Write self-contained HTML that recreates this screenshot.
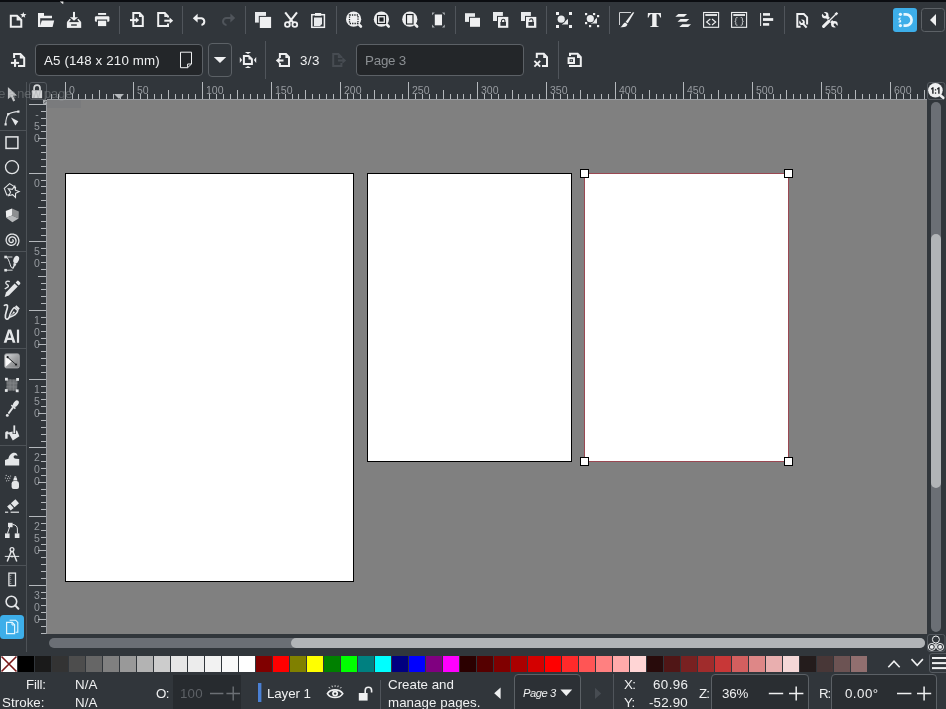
<!DOCTYPE html><html><head><meta charset="utf-8"><title>Inkscape</title><style>
*{box-sizing:border-box;margin:0;padding:0}
html,body{width:946px;height:709px;overflow:hidden;background:#31363b}
body{position:relative;font-family:"Liberation Sans",sans-serif;color:#eff0f1;font-size:13px}
.a{position:absolute}
.sep{position:absolute;width:1px;background:#50555b}
svg{position:absolute;overflow:visible}
.t{position:absolute;white-space:nowrap;line-height:1;will-change:transform}
.entry{position:absolute;background:#232629;border:1px solid #5c6166;border-radius:4px}
.btn{position:absolute;border:1px solid #5c6166;border-radius:4px}
.rt{position:absolute;background:#b4b8bc}
.rl{position:absolute;will-change:transform;color:#979ba0;font-size:10.5px;line-height:1;white-space:nowrap}
</style></head><body>
<div class="a" style="left:0;top:0;width:946px;height:2px;background:#0b0d11"></div>
<svg style="left:0;top:0" width="70" height="6" viewBox="0 0 70 6"><path d="M59.8 1.4H63.4L63.2 4.2Z" fill="#e8e8e8"/></svg>
<div class="a" style="left:47px;top:100px;width:880px;height:534px;background:#808080"></div>
<div class="a" style="left:47px;top:100px;width:34px;height:8px;background:#7a7b7d"></div>
<div class="a" style="left:65px;top:173px;width:289px;height:409px;background:#fff;border:1px solid #000"></div>
<div class="a" style="left:367px;top:173px;width:205px;height:289px;background:#fff;border:1px solid #000"></div>
<div class="a" style="left:584px;top:173px;width:205px;height:289px;background:#fff;border:1px solid #9a4852"></div>
<div class="a" style="left:580px;top:169px;width:9px;height:9px;background:#fff;border:1px solid #000"></div>
<div class="a" style="left:784px;top:169px;width:9px;height:9px;background:#fff;border:1px solid #000"></div>
<div class="a" style="left:580px;top:457px;width:9px;height:9px;background:#fff;border:1px solid #000"></div>
<div class="a" style="left:784px;top:457px;width:9px;height:9px;background:#fff;border:1px solid #000"></div>
<div class="a" style="left:27px;top:82px;width:900px;height:18px;background:#31363b"></div>
<div class="a" style="left:47px;top:99px;width:880px;height:1px;background:#9a9da1"></div>
<div class="a" style="left:46px;top:100px;width:1px;height:534px;background:#9a9da1"></div>
<div class="rt" style="left:51px;top:94px;width:1px;height:5px"></div>
<div class="rt" style="left:58px;top:94px;width:1px;height:5px"></div>
<div class="rt" style="left:65px;top:82px;width:1px;height:17px"></div>
<div class="rl" style="left:69px;top:85px">0</div>
<div class="rt" style="left:72px;top:94px;width:1px;height:5px"></div>
<div class="rt" style="left:78px;top:94px;width:1px;height:5px"></div>
<div class="rt" style="left:85px;top:94px;width:1px;height:5px"></div>
<div class="rt" style="left:92px;top:94px;width:1px;height:5px"></div>
<div class="rt" style="left:99px;top:90px;width:1px;height:9px"></div>
<div class="rt" style="left:106px;top:94px;width:1px;height:5px"></div>
<div class="rt" style="left:113px;top:94px;width:1px;height:5px"></div>
<div class="rt" style="left:120px;top:94px;width:1px;height:5px"></div>
<div class="rt" style="left:127px;top:94px;width:1px;height:5px"></div>
<div class="rt" style="left:133px;top:82px;width:1px;height:17px"></div>
<div class="rl" style="left:137px;top:85px">50</div>
<div class="rt" style="left:140px;top:94px;width:1px;height:5px"></div>
<div class="rt" style="left:147px;top:94px;width:1px;height:5px"></div>
<div class="rt" style="left:154px;top:94px;width:1px;height:5px"></div>
<div class="rt" style="left:161px;top:94px;width:1px;height:5px"></div>
<div class="rt" style="left:168px;top:90px;width:1px;height:9px"></div>
<div class="rt" style="left:175px;top:94px;width:1px;height:5px"></div>
<div class="rt" style="left:182px;top:94px;width:1px;height:5px"></div>
<div class="rt" style="left:188px;top:94px;width:1px;height:5px"></div>
<div class="rt" style="left:195px;top:94px;width:1px;height:5px"></div>
<div class="rt" style="left:202px;top:82px;width:1px;height:17px"></div>
<div class="rl" style="left:206px;top:85px">100</div>
<div class="rt" style="left:209px;top:94px;width:1px;height:5px"></div>
<div class="rt" style="left:216px;top:94px;width:1px;height:5px"></div>
<div class="rt" style="left:223px;top:94px;width:1px;height:5px"></div>
<div class="rt" style="left:230px;top:94px;width:1px;height:5px"></div>
<div class="rt" style="left:237px;top:90px;width:1px;height:9px"></div>
<div class="rt" style="left:243px;top:94px;width:1px;height:5px"></div>
<div class="rt" style="left:250px;top:94px;width:1px;height:5px"></div>
<div class="rt" style="left:257px;top:94px;width:1px;height:5px"></div>
<div class="rt" style="left:264px;top:94px;width:1px;height:5px"></div>
<div class="rt" style="left:271px;top:82px;width:1px;height:17px"></div>
<div class="rl" style="left:275px;top:85px">150</div>
<div class="rt" style="left:278px;top:94px;width:1px;height:5px"></div>
<div class="rt" style="left:285px;top:94px;width:1px;height:5px"></div>
<div class="rt" style="left:292px;top:94px;width:1px;height:5px"></div>
<div class="rt" style="left:298px;top:94px;width:1px;height:5px"></div>
<div class="rt" style="left:305px;top:90px;width:1px;height:9px"></div>
<div class="rt" style="left:312px;top:94px;width:1px;height:5px"></div>
<div class="rt" style="left:319px;top:94px;width:1px;height:5px"></div>
<div class="rt" style="left:326px;top:94px;width:1px;height:5px"></div>
<div class="rt" style="left:333px;top:94px;width:1px;height:5px"></div>
<div class="rt" style="left:340px;top:82px;width:1px;height:17px"></div>
<div class="rl" style="left:344px;top:85px">200</div>
<div class="rt" style="left:347px;top:94px;width:1px;height:5px"></div>
<div class="rt" style="left:353px;top:94px;width:1px;height:5px"></div>
<div class="rt" style="left:360px;top:94px;width:1px;height:5px"></div>
<div class="rt" style="left:367px;top:94px;width:1px;height:5px"></div>
<div class="rt" style="left:374px;top:90px;width:1px;height:9px"></div>
<div class="rt" style="left:381px;top:94px;width:1px;height:5px"></div>
<div class="rt" style="left:388px;top:94px;width:1px;height:5px"></div>
<div class="rt" style="left:395px;top:94px;width:1px;height:5px"></div>
<div class="rt" style="left:402px;top:94px;width:1px;height:5px"></div>
<div class="rt" style="left:408px;top:82px;width:1px;height:17px"></div>
<div class="rl" style="left:412px;top:85px">250</div>
<div class="rt" style="left:415px;top:94px;width:1px;height:5px"></div>
<div class="rt" style="left:422px;top:94px;width:1px;height:5px"></div>
<div class="rt" style="left:429px;top:94px;width:1px;height:5px"></div>
<div class="rt" style="left:436px;top:94px;width:1px;height:5px"></div>
<div class="rt" style="left:443px;top:90px;width:1px;height:9px"></div>
<div class="rt" style="left:450px;top:94px;width:1px;height:5px"></div>
<div class="rt" style="left:457px;top:94px;width:1px;height:5px"></div>
<div class="rt" style="left:463px;top:94px;width:1px;height:5px"></div>
<div class="rt" style="left:470px;top:94px;width:1px;height:5px"></div>
<div class="rt" style="left:477px;top:82px;width:1px;height:17px"></div>
<div class="rl" style="left:481px;top:85px">300</div>
<div class="rt" style="left:484px;top:94px;width:1px;height:5px"></div>
<div class="rt" style="left:491px;top:94px;width:1px;height:5px"></div>
<div class="rt" style="left:498px;top:94px;width:1px;height:5px"></div>
<div class="rt" style="left:505px;top:94px;width:1px;height:5px"></div>
<div class="rt" style="left:512px;top:90px;width:1px;height:9px"></div>
<div class="rt" style="left:518px;top:94px;width:1px;height:5px"></div>
<div class="rt" style="left:525px;top:94px;width:1px;height:5px"></div>
<div class="rt" style="left:532px;top:94px;width:1px;height:5px"></div>
<div class="rt" style="left:539px;top:94px;width:1px;height:5px"></div>
<div class="rt" style="left:546px;top:82px;width:1px;height:17px"></div>
<div class="rl" style="left:550px;top:85px">350</div>
<div class="rt" style="left:553px;top:94px;width:1px;height:5px"></div>
<div class="rt" style="left:560px;top:94px;width:1px;height:5px"></div>
<div class="rt" style="left:567px;top:94px;width:1px;height:5px"></div>
<div class="rt" style="left:573px;top:94px;width:1px;height:5px"></div>
<div class="rt" style="left:580px;top:90px;width:1px;height:9px"></div>
<div class="rt" style="left:587px;top:94px;width:1px;height:5px"></div>
<div class="rt" style="left:594px;top:94px;width:1px;height:5px"></div>
<div class="rt" style="left:601px;top:94px;width:1px;height:5px"></div>
<div class="rt" style="left:608px;top:94px;width:1px;height:5px"></div>
<div class="rt" style="left:615px;top:82px;width:1px;height:17px"></div>
<div class="rl" style="left:619px;top:85px">400</div>
<div class="rt" style="left:621px;top:94px;width:1px;height:5px"></div>
<div class="rt" style="left:628px;top:94px;width:1px;height:5px"></div>
<div class="rt" style="left:635px;top:94px;width:1px;height:5px"></div>
<div class="rt" style="left:642px;top:94px;width:1px;height:5px"></div>
<div class="rt" style="left:649px;top:90px;width:1px;height:9px"></div>
<div class="rt" style="left:656px;top:94px;width:1px;height:5px"></div>
<div class="rt" style="left:663px;top:94px;width:1px;height:5px"></div>
<div class="rt" style="left:670px;top:94px;width:1px;height:5px"></div>
<div class="rt" style="left:676px;top:94px;width:1px;height:5px"></div>
<div class="rt" style="left:683px;top:82px;width:1px;height:17px"></div>
<div class="rl" style="left:687px;top:85px">450</div>
<div class="rt" style="left:690px;top:94px;width:1px;height:5px"></div>
<div class="rt" style="left:697px;top:94px;width:1px;height:5px"></div>
<div class="rt" style="left:704px;top:94px;width:1px;height:5px"></div>
<div class="rt" style="left:711px;top:94px;width:1px;height:5px"></div>
<div class="rt" style="left:718px;top:90px;width:1px;height:9px"></div>
<div class="rt" style="left:725px;top:94px;width:1px;height:5px"></div>
<div class="rt" style="left:731px;top:94px;width:1px;height:5px"></div>
<div class="rt" style="left:738px;top:94px;width:1px;height:5px"></div>
<div class="rt" style="left:745px;top:94px;width:1px;height:5px"></div>
<div class="rt" style="left:752px;top:82px;width:1px;height:17px"></div>
<div class="rl" style="left:756px;top:85px">500</div>
<div class="rt" style="left:759px;top:94px;width:1px;height:5px"></div>
<div class="rt" style="left:766px;top:94px;width:1px;height:5px"></div>
<div class="rt" style="left:773px;top:94px;width:1px;height:5px"></div>
<div class="rt" style="left:780px;top:94px;width:1px;height:5px"></div>
<div class="rt" style="left:786px;top:90px;width:1px;height:9px"></div>
<div class="rt" style="left:793px;top:94px;width:1px;height:5px"></div>
<div class="rt" style="left:800px;top:94px;width:1px;height:5px"></div>
<div class="rt" style="left:807px;top:94px;width:1px;height:5px"></div>
<div class="rt" style="left:814px;top:94px;width:1px;height:5px"></div>
<div class="rt" style="left:821px;top:82px;width:1px;height:17px"></div>
<div class="rl" style="left:825px;top:85px">550</div>
<div class="rt" style="left:828px;top:94px;width:1px;height:5px"></div>
<div class="rt" style="left:835px;top:94px;width:1px;height:5px"></div>
<div class="rt" style="left:841px;top:94px;width:1px;height:5px"></div>
<div class="rt" style="left:848px;top:94px;width:1px;height:5px"></div>
<div class="rt" style="left:855px;top:90px;width:1px;height:9px"></div>
<div class="rt" style="left:862px;top:94px;width:1px;height:5px"></div>
<div class="rt" style="left:869px;top:94px;width:1px;height:5px"></div>
<div class="rt" style="left:876px;top:94px;width:1px;height:5px"></div>
<div class="rt" style="left:883px;top:94px;width:1px;height:5px"></div>
<div class="rt" style="left:890px;top:82px;width:1px;height:17px"></div>
<div class="rl" style="left:894px;top:85px">600</div>
<div class="rt" style="left:896px;top:94px;width:1px;height:5px"></div>
<div class="rt" style="left:903px;top:94px;width:1px;height:5px"></div>
<div class="rt" style="left:910px;top:94px;width:1px;height:5px"></div>
<div class="rt" style="left:917px;top:94px;width:1px;height:5px"></div>
<div class="rt" style="left:924px;top:90px;width:1px;height:9px"></div>
<div class="rt" style="left:29px;top:104px;width:17px;height:1px"></div>
<div class="rl" style="left:32px;width:10px;text-align:center;top:109px">-</div>
<div class="rl" style="left:32px;width:10px;text-align:center;top:121px">5</div>
<div class="rl" style="left:32px;width:10px;text-align:center;top:133px">0</div>
<div class="rt" style="left:41px;top:111px;width:5px;height:1px"></div>
<div class="rt" style="left:41px;top:118px;width:5px;height:1px"></div>
<div class="rt" style="left:41px;top:125px;width:5px;height:1px"></div>
<div class="rt" style="left:41px;top:131px;width:5px;height:1px"></div>
<div class="rt" style="left:38px;top:138px;width:8px;height:1px"></div>
<div class="rt" style="left:41px;top:145px;width:5px;height:1px"></div>
<div class="rt" style="left:41px;top:152px;width:5px;height:1px"></div>
<div class="rt" style="left:41px;top:159px;width:5px;height:1px"></div>
<div class="rt" style="left:41px;top:166px;width:5px;height:1px"></div>
<div class="rt" style="left:29px;top:173px;width:17px;height:1px"></div>
<div class="rl" style="left:32px;width:10px;text-align:center;top:178px">0</div>
<div class="rt" style="left:41px;top:180px;width:5px;height:1px"></div>
<div class="rt" style="left:41px;top:186px;width:5px;height:1px"></div>
<div class="rt" style="left:41px;top:193px;width:5px;height:1px"></div>
<div class="rt" style="left:41px;top:200px;width:5px;height:1px"></div>
<div class="rt" style="left:38px;top:207px;width:8px;height:1px"></div>
<div class="rt" style="left:41px;top:214px;width:5px;height:1px"></div>
<div class="rt" style="left:41px;top:221px;width:5px;height:1px"></div>
<div class="rt" style="left:41px;top:228px;width:5px;height:1px"></div>
<div class="rt" style="left:41px;top:235px;width:5px;height:1px"></div>
<div class="rt" style="left:29px;top:241px;width:17px;height:1px"></div>
<div class="rl" style="left:32px;width:10px;text-align:center;top:246px">5</div>
<div class="rl" style="left:32px;width:10px;text-align:center;top:258px">0</div>
<div class="rt" style="left:41px;top:248px;width:5px;height:1px"></div>
<div class="rt" style="left:41px;top:255px;width:5px;height:1px"></div>
<div class="rt" style="left:41px;top:262px;width:5px;height:1px"></div>
<div class="rt" style="left:41px;top:269px;width:5px;height:1px"></div>
<div class="rt" style="left:38px;top:276px;width:8px;height:1px"></div>
<div class="rt" style="left:41px;top:283px;width:5px;height:1px"></div>
<div class="rt" style="left:41px;top:289px;width:5px;height:1px"></div>
<div class="rt" style="left:41px;top:296px;width:5px;height:1px"></div>
<div class="rt" style="left:41px;top:303px;width:5px;height:1px"></div>
<div class="rt" style="left:29px;top:310px;width:17px;height:1px"></div>
<div class="rl" style="left:32px;width:10px;text-align:center;top:315px">1</div>
<div class="rl" style="left:32px;width:10px;text-align:center;top:327px">0</div>
<div class="rl" style="left:32px;width:10px;text-align:center;top:339px">0</div>
<div class="rt" style="left:41px;top:317px;width:5px;height:1px"></div>
<div class="rt" style="left:41px;top:324px;width:5px;height:1px"></div>
<div class="rt" style="left:41px;top:331px;width:5px;height:1px"></div>
<div class="rt" style="left:41px;top:338px;width:5px;height:1px"></div>
<div class="rt" style="left:38px;top:344px;width:8px;height:1px"></div>
<div class="rt" style="left:41px;top:351px;width:5px;height:1px"></div>
<div class="rt" style="left:41px;top:358px;width:5px;height:1px"></div>
<div class="rt" style="left:41px;top:365px;width:5px;height:1px"></div>
<div class="rt" style="left:41px;top:372px;width:5px;height:1px"></div>
<div class="rt" style="left:29px;top:379px;width:17px;height:1px"></div>
<div class="rl" style="left:32px;width:10px;text-align:center;top:384px">1</div>
<div class="rl" style="left:32px;width:10px;text-align:center;top:396px">5</div>
<div class="rl" style="left:32px;width:10px;text-align:center;top:408px">0</div>
<div class="rt" style="left:41px;top:386px;width:5px;height:1px"></div>
<div class="rt" style="left:41px;top:392px;width:5px;height:1px"></div>
<div class="rt" style="left:41px;top:399px;width:5px;height:1px"></div>
<div class="rt" style="left:41px;top:406px;width:5px;height:1px"></div>
<div class="rt" style="left:38px;top:413px;width:8px;height:1px"></div>
<div class="rt" style="left:41px;top:420px;width:5px;height:1px"></div>
<div class="rt" style="left:41px;top:427px;width:5px;height:1px"></div>
<div class="rt" style="left:41px;top:434px;width:5px;height:1px"></div>
<div class="rt" style="left:41px;top:441px;width:5px;height:1px"></div>
<div class="rt" style="left:29px;top:447px;width:17px;height:1px"></div>
<div class="rl" style="left:32px;width:10px;text-align:center;top:452px">2</div>
<div class="rl" style="left:32px;width:10px;text-align:center;top:464px">0</div>
<div class="rl" style="left:32px;width:10px;text-align:center;top:476px">0</div>
<div class="rt" style="left:41px;top:454px;width:5px;height:1px"></div>
<div class="rt" style="left:41px;top:461px;width:5px;height:1px"></div>
<div class="rt" style="left:41px;top:468px;width:5px;height:1px"></div>
<div class="rt" style="left:41px;top:475px;width:5px;height:1px"></div>
<div class="rt" style="left:38px;top:482px;width:8px;height:1px"></div>
<div class="rt" style="left:41px;top:489px;width:5px;height:1px"></div>
<div class="rt" style="left:41px;top:495px;width:5px;height:1px"></div>
<div class="rt" style="left:41px;top:502px;width:5px;height:1px"></div>
<div class="rt" style="left:41px;top:509px;width:5px;height:1px"></div>
<div class="rt" style="left:29px;top:516px;width:17px;height:1px"></div>
<div class="rl" style="left:32px;width:10px;text-align:center;top:521px">2</div>
<div class="rl" style="left:32px;width:10px;text-align:center;top:533px">5</div>
<div class="rl" style="left:32px;width:10px;text-align:center;top:545px">0</div>
<div class="rt" style="left:41px;top:523px;width:5px;height:1px"></div>
<div class="rt" style="left:41px;top:530px;width:5px;height:1px"></div>
<div class="rt" style="left:41px;top:537px;width:5px;height:1px"></div>
<div class="rt" style="left:41px;top:544px;width:5px;height:1px"></div>
<div class="rt" style="left:38px;top:550px;width:8px;height:1px"></div>
<div class="rt" style="left:41px;top:557px;width:5px;height:1px"></div>
<div class="rt" style="left:41px;top:564px;width:5px;height:1px"></div>
<div class="rt" style="left:41px;top:571px;width:5px;height:1px"></div>
<div class="rt" style="left:41px;top:578px;width:5px;height:1px"></div>
<div class="rt" style="left:29px;top:585px;width:17px;height:1px"></div>
<div class="rl" style="left:32px;width:10px;text-align:center;top:590px">3</div>
<div class="rl" style="left:32px;width:10px;text-align:center;top:602px">0</div>
<div class="rl" style="left:32px;width:10px;text-align:center;top:614px">0</div>
<div class="rt" style="left:41px;top:592px;width:5px;height:1px"></div>
<div class="rt" style="left:41px;top:598px;width:5px;height:1px"></div>
<div class="rt" style="left:41px;top:605px;width:5px;height:1px"></div>
<div class="rt" style="left:41px;top:612px;width:5px;height:1px"></div>
<div class="rt" style="left:38px;top:619px;width:8px;height:1px"></div>
<div class="rt" style="left:41px;top:626px;width:5px;height:1px"></div>
<div class="rt" style="left:41px;top:633px;width:5px;height:1px"></div>
<svg style="left:114px;top:94px" width="10" height="5" viewBox="0 0 10 5"><path d="M0 0H10L5 5Z" fill="#b4b8bc"/></svg>
<div class="a" style="left:26px;top:82px;width:1px;height:570px;background:#4d5257"></div>
<div class="a" style="left:0;top:130px;width:26px;height:1px;background:#4d5257"></div>
<div class="a" style="left:0;top:251px;width:26px;height:1px;background:#4d5257"></div>
<div class="a" style="left:0;top:348px;width:26px;height:1px;background:#4d5257"></div>
<div class="a" style="left:0;top:445px;width:26px;height:1px;background:#4d5257"></div>
<div class="a" style="left:0;top:565px;width:26px;height:1px;background:#4d5257"></div>
<div class="btn" style="left:29px;top:82px;width:18px;height:18px;border-color:#555a60;border-radius:3px"></div>
<div class="a" style="left:927px;top:100px;width:19px;height:552px;background:#31363b"></div>
<div class="a" style="left:931px;top:102px;width:10px;height:530px;border-radius:5px;background:#6b6f75"></div>
<div class="a" style="left:931px;top:234px;width:10px;height:254px;border-radius:5px;background:#b1b4b7"></div>
<div class="a" style="left:49px;top:638px;width:876px;height:10px;border-radius:5px;background:#6b6f75"></div>
<div class="a" style="left:291px;top:638px;width:634px;height:10px;border-radius:5px;background:#b1b4b7"></div>
<svg style="left:1px;top:656px" width="16" height="16" viewBox="0 0 16 16"><rect width="16" height="16" fill="#fff"/><path d="M0.5 0.5L15.5 15.5M15.5 0.5L0.5 15.5" stroke="#7a1a1a" stroke-width="1.6"/></svg>
<div class="a" style="left:18px;top:656px;width:16px;height:16px;background:#000000"></div>
<div class="a" style="left:35px;top:656px;width:16px;height:16px;background:#1a1a1a"></div>
<div class="a" style="left:52px;top:656px;width:16px;height:16px;background:#333333"></div>
<div class="a" style="left:69px;top:656px;width:16px;height:16px;background:#4d4d4d"></div>
<div class="a" style="left:86px;top:656px;width:16px;height:16px;background:#666666"></div>
<div class="a" style="left:103px;top:656px;width:16px;height:16px;background:#808080"></div>
<div class="a" style="left:120px;top:656px;width:16px;height:16px;background:#999999"></div>
<div class="a" style="left:137px;top:656px;width:16px;height:16px;background:#b3b3b3"></div>
<div class="a" style="left:154px;top:656px;width:16px;height:16px;background:#cccccc"></div>
<div class="a" style="left:171px;top:656px;width:16px;height:16px;background:#e6e6e6"></div>
<div class="a" style="left:188px;top:656px;width:16px;height:16px;background:#ececec"></div>
<div class="a" style="left:205px;top:656px;width:16px;height:16px;background:#f2f2f2"></div>
<div class="a" style="left:222px;top:656px;width:16px;height:16px;background:#f9f9f9"></div>
<div class="a" style="left:239px;top:656px;width:16px;height:16px;background:#ffffff"></div>
<div class="a" style="left:256px;top:656px;width:16px;height:16px;background:#800000"></div>
<div class="a" style="left:273px;top:656px;width:16px;height:16px;background:#ff0000"></div>
<div class="a" style="left:290px;top:656px;width:16px;height:16px;background:#808000"></div>
<div class="a" style="left:307px;top:656px;width:16px;height:16px;background:#ffff00"></div>
<div class="a" style="left:324px;top:656px;width:16px;height:16px;background:#008000"></div>
<div class="a" style="left:341px;top:656px;width:16px;height:16px;background:#00ff00"></div>
<div class="a" style="left:358px;top:656px;width:16px;height:16px;background:#008080"></div>
<div class="a" style="left:375px;top:656px;width:16px;height:16px;background:#00ffff"></div>
<div class="a" style="left:392px;top:656px;width:16px;height:16px;background:#000080"></div>
<div class="a" style="left:409px;top:656px;width:16px;height:16px;background:#0000ff"></div>
<div class="a" style="left:426px;top:656px;width:16px;height:16px;background:#800080"></div>
<div class="a" style="left:443px;top:656px;width:16px;height:16px;background:#ff00ff"></div>
<div class="a" style="left:460px;top:656px;width:16px;height:16px;background:#2b0000"></div>
<div class="a" style="left:477px;top:656px;width:16px;height:16px;background:#550000"></div>
<div class="a" style="left:494px;top:656px;width:16px;height:16px;background:#800000"></div>
<div class="a" style="left:511px;top:656px;width:16px;height:16px;background:#aa0000"></div>
<div class="a" style="left:528px;top:656px;width:16px;height:16px;background:#d40000"></div>
<div class="a" style="left:545px;top:656px;width:16px;height:16px;background:#ff0000"></div>
<div class="a" style="left:562px;top:656px;width:16px;height:16px;background:#ff2a2a"></div>
<div class="a" style="left:579px;top:656px;width:16px;height:16px;background:#ff5555"></div>
<div class="a" style="left:596px;top:656px;width:16px;height:16px;background:#ff8080"></div>
<div class="a" style="left:613px;top:656px;width:16px;height:16px;background:#ffaaaa"></div>
<div class="a" style="left:630px;top:656px;width:16px;height:16px;background:#ffd5d5"></div>
<div class="a" style="left:647px;top:656px;width:16px;height:16px;background:#280b0b"></div>
<div class="a" style="left:664px;top:656px;width:16px;height:16px;background:#501616"></div>
<div class="a" style="left:681px;top:656px;width:16px;height:16px;background:#782121"></div>
<div class="a" style="left:698px;top:656px;width:16px;height:16px;background:#a02c2c"></div>
<div class="a" style="left:715px;top:656px;width:16px;height:16px;background:#c83737"></div>
<div class="a" style="left:732px;top:656px;width:16px;height:16px;background:#d35f5f"></div>
<div class="a" style="left:749px;top:656px;width:16px;height:16px;background:#de8787"></div>
<div class="a" style="left:766px;top:656px;width:16px;height:16px;background:#e9afaf"></div>
<div class="a" style="left:783px;top:656px;width:16px;height:16px;background:#f4d7d7"></div>
<div class="a" style="left:800px;top:656px;width:16px;height:16px;background:#241c1c"></div>
<div class="a" style="left:817px;top:656px;width:16px;height:16px;background:#483737"></div>
<div class="a" style="left:834px;top:656px;width:16px;height:16px;background:#6c5353"></div>
<div class="a" style="left:851px;top:656px;width:16px;height:16px;background:#916f6f"></div>
<div class="entry" style="left:35px;top:44px;width:168px;height:32px"></div>
<div class="btn" style="left:208px;top:43px;width:24px;height:34px"></div>
<div class="entry" style="left:356px;top:44px;width:168px;height:32px"></div>
<div class="t" style="left:43.60px;top:53.72px;font-size:13.33px;letter-spacing:0.15px;color:#eff0f1;font-style:normal;">A5 (148 x 210 mm)</div>
<div class="t" style="left:300.00px;top:53.72px;font-size:13.33px;letter-spacing:0.40px;color:#eff0f1;font-style:normal;">3/3</div>
<div class="t" style="left:365.30px;top:53.72px;font-size:13.33px;letter-spacing:-0.20px;color:#8b8f93;font-style:normal;">Page 3</div>
<div class="a" style="left:173px;top:675px;width:68px;height:40px;background:#272b2f"></div>
<div class="entry" style="left:514px;top:674px;width:67px;height:40px;background:#2c3035;border-color:#5c6166"></div>
<div class="entry" style="left:711px;top:674px;width:98px;height:40px;background:#2a2e32;border-radius:4px"></div>
<div class="entry" style="left:831px;top:674px;width:106px;height:40px;background:#2a2e32;border-radius:4px"></div>
<div class="t" style="left:25.80px;top:677.52px;font-size:13.33px;letter-spacing:-0.20px;color:#eff0f1;font-style:normal;">Fill:</div>
<div class="t" style="left:1.90px;top:695.72px;font-size:13.33px;letter-spacing:0.05px;color:#eff0f1;font-style:normal;">Stroke:</div>
<div class="t" style="left:75.30px;top:677.52px;font-size:13.33px;letter-spacing:0.10px;color:#eff0f1;font-style:normal;">N/A</div>
<div class="t" style="left:75.30px;top:695.72px;font-size:13.33px;letter-spacing:0.10px;color:#eff0f1;font-style:normal;">N/A</div>
<div class="t" style="left:156.00px;top:686.72px;font-size:13.33px;letter-spacing:-0.60px;color:#eff0f1;font-style:normal;">O:</div>
<div class="t" style="left:179.60px;top:686.72px;font-size:13.33px;letter-spacing:0.20px;color:#5d6166;font-style:normal;">100</div>
<div class="t" style="left:267.20px;top:686.72px;font-size:13.33px;letter-spacing:-0.10px;color:#eff0f1;font-style:normal;">Layer 1</div>
<div class="t" style="left:388.40px;top:677.72px;font-size:13.33px;letter-spacing:0.00px;color:#eff0f1;font-style:normal;">Create and</div>
<div class="t" style="left:388.40px;top:695.72px;font-size:13.33px;letter-spacing:0.05px;color:#eff0f1;font-style:normal;">manage pages.</div>
<div class="t" style="left:523.30px;top:687.72px;font-size:11.20px;letter-spacing:-0.45px;color:#eff0f1;font-style:italic;">Page 3</div>
<div class="t" style="left:624.00px;top:677.72px;font-size:13.33px;letter-spacing:-0.70px;color:#eff0f1;font-style:normal;">X:</div>
<div class="t" style="left:624.00px;top:695.72px;font-size:13.33px;letter-spacing:-0.70px;color:#eff0f1;font-style:normal;">Y:</div>
<div class="t" style="left:652.80px;top:677.72px;font-size:13.33px;letter-spacing:0.42px;color:#eff0f1;font-style:normal;">60.96</div>
<div class="t" style="left:649.40px;top:695.72px;font-size:13.33px;letter-spacing:0.18px;color:#eff0f1;font-style:normal;">-52.90</div>
<div class="t" style="left:698.90px;top:686.72px;font-size:13.33px;letter-spacing:-1.00px;color:#eff0f1;font-style:normal;">Z:</div>
<div class="t" style="left:722.20px;top:686.72px;font-size:13.33px;letter-spacing:-0.15px;color:#eff0f1;font-style:normal;">36%</div>
<div class="t" style="left:819.20px;top:686.72px;font-size:13.33px;letter-spacing:-1.20px;color:#eff0f1;font-style:normal;">R:</div>
<div class="t" style="left:844.80px;top:686.72px;font-size:13.33px;letter-spacing:0.46px;color:#eff0f1;font-style:normal;">0.00°</div>
<svg style="left:0;top:0" width="946" height="709" viewBox="0 0 946 709"><rect x="119" y="6" width="1" height="28" fill="#50555b"/>
<rect x="182" y="6" width="1" height="28" fill="#50555b"/>
<rect x="245" y="6" width="1" height="28" fill="#50555b"/>
<rect x="336" y="6" width="1" height="28" fill="#50555b"/>
<rect x="455" y="6" width="1" height="28" fill="#50555b"/>
<rect x="546" y="6" width="1" height="28" fill="#50555b"/>
<rect x="609" y="6" width="1" height="28" fill="#50555b"/>
<rect x="784" y="6" width="1" height="28" fill="#50555b"/>
<path d="M10.8 15.8H17L21.3 20V26.8H10.8Z" fill="none" stroke="#eff0f1" stroke-width="2" stroke-linejoin="miter"/>
<path d="M16.6 16.2V20.4H21Z" fill="#eff0f1"/>
<polygon points="23.30,11.90 24.12,14.07 26.44,14.18 24.63,15.63 25.24,17.87 23.30,16.60 21.36,17.87 21.97,15.63 20.16,14.18 22.48,14.07" fill="#eff0f1"/>
<path d="M38 13H44V15.7H52V18.2H40.2V27H38Z" fill="#eff0f1"/>
<path d="M41.8 20.5H54.2L52.6 27H39.6Z" fill="#eff0f1"/>
<rect x="66.9" y="22.1" width="14.3" height="5.8" fill="#eff0f1"/>
<path d="M67.6 22.6L70.3 19.2M80.5 22.6L77.8 19.2" stroke="#eff0f1" stroke-width="1.6" fill="none"/>
<rect x="73" y="11.9" width="2" height="6" fill="#eff0f1"/>
<path d="M69.9 17.2H78.1L74 20.8Z" fill="#eff0f1"/>
<rect x="71.1" y="24.3" width="5.7" height="1.4" fill="#31363b"/>
<rect x="98.1" y="13" width="8" height="1.9" fill="#eff0f1"/>
<rect x="94.9" y="16.3" width="14.5" height="5.4" rx="1.2" fill="#eff0f1"/>
<rect x="96.9" y="19.5" width="10.3" height="3" fill="#31363b"/>
<rect x="98" y="20.7" width="8.2" height="5.4" fill="#eff0f1"/>
<path d="M133.3 13.1H139.6L142.8 16.4V26H133.3Z" fill="none" stroke="#eff0f1" stroke-width="2"/>
<path d="M139 13.4V17H142.6Z" fill="#eff0f1"/>
<rect x="130" y="19.1" width="7" height="2" fill="#eff0f1"/>
<path d="M135.8 17.2L139.2 20.1L135.8 23Z" fill="#eff0f1"/>
<path d="M168 17.5V16.4L164.8 13.1H158.2V26H168V23.5" fill="none" stroke="#eff0f1" stroke-width="2"/>
<path d="M164.3 13.4V17H167.8Z" fill="#eff0f1"/>
<rect x="164.3" y="19.7" width="6" height="2" fill="#eff0f1"/>
<path d="M169.6 17.6L173.2 20.7L169.6 23.8Z" fill="#eff0f1"/>
<path d="M196 18.2H201.5A3.4 3.4 0 0 1 201.5 24.9" fill="none" stroke="#eff0f1" stroke-width="2"/>
<path d="M192.8 18.2L197.6 13.8V22.6Z" fill="#eff0f1"/>
<path d="M232 18H226.5A3.4 3.4 0 0 0 226.5 24.9" fill="none" stroke="#50555b" stroke-width="2"/>
<path d="M235.2 18L230.4 13.6V22.4Z" fill="#50555b"/>
<rect x="255" y="12" width="11" height="10.6" fill="#e8eaec"/>
<rect x="258.8" y="15.9" width="13" height="13" fill="#31363b"/>
<rect x="259.8" y="16.9" width="11.3" height="11.1" fill="#eff0f1"/>
<path d="M285.2 12.4L293.4 22.8M297 12.4L288.8 22.8" stroke="#eff0f1" stroke-width="2.1" fill="none"/>
<circle cx="287.4" cy="24.5" r="2.4" fill="none" stroke="#eff0f1" stroke-width="1.8"/>
<circle cx="294.8" cy="24.5" r="2.4" fill="none" stroke="#eff0f1" stroke-width="1.8"/>
<rect x="311.8" y="14.7" width="12.6" height="12.6" fill="none" stroke="#eff0f1" stroke-width="1.5"/>
<rect x="315" y="13" width="6.2" height="2.8" fill="#eff0f1"/>
<path d="M314 17.6H322V24L320 26H314Z" fill="#e8eaec"/>
<path d="M358.1 23.7L360.90000000000003 26.5" stroke="#eff0f1" stroke-width="2.6" stroke-linecap="round"/>
<circle cx="353.6" cy="19.2" r="7.6" fill="#eff0f1"/>
<path d="M385.9 23.7L388.7 26.5" stroke="#eff0f1" stroke-width="2.6" stroke-linecap="round"/>
<circle cx="381.4" cy="19.2" r="7.6" fill="#eff0f1"/>
<path d="M414.3 23.7L417.1 26.5" stroke="#eff0f1" stroke-width="2.6" stroke-linecap="round"/>
<circle cx="409.8" cy="19.2" r="7.6" fill="#eff0f1"/>
<rect x="349.5" y="15" width="8.5" height="8.5" fill="none" stroke="#1f2326" stroke-width="1.3" stroke-dasharray="1.3 1.1"/>
<rect x="377.5" y="15.5" width="8" height="8" fill="none" stroke="#1f2326" stroke-width="1.15"/>
<rect x="379.4" y="17.4" width="4.2" height="4.2" fill="#1f2326"/>
<rect x="406.5" y="14.5" width="6.5" height="9.5" fill="none" stroke="#1f2326" stroke-width="1.15"/>
<rect x="434.8" y="14.5" width="7.2" height="10.8" fill="#eff0f1"/>
<path d="M432 12.4H434.8L432 15.2Z M444.8 12.4H442L444.8 15.2Z M432 27.4H434.8L432 24.6Z M444.8 27.4H442L444.8 24.6Z" fill="#a9adb1"/>
<rect x="465" y="13.2" width="10" height="8.7" fill="#e8eaec"/>
<rect x="469" y="16.8" width="12" height="11" fill="#31363b"/>
<rect x="470" y="17.8" width="10" height="9" fill="#eff0f1"/>
<rect x="493" y="12" width="9.9" height="9" fill="#e8eaec"/>
<rect x="497" y="15.9" width="12" height="13" fill="#31363b"/>
<rect x="498" y="16.9" width="10.3" height="10.9" fill="#eff0f1"/>
<rect x="500.4" y="22" width="5.6" height="3.8" fill="#31363b"/>
<path d="M501.5 22.3V21A1.7 1.7 0 0 1 504.9 21V22.3" fill="none" stroke="#31363b" stroke-width="1.1"/>
<rect x="521" y="12" width="9.9" height="9" fill="#e8eaec"/>
<rect x="525" y="15.9" width="12" height="13" fill="#31363b"/>
<rect x="526" y="16.9" width="10.3" height="10.9" fill="#eff0f1"/>
<rect x="528.4" y="22" width="5.6" height="3.8" fill="#31363b"/>
<path d="M529.5 20.6A1.7 1.7 0 0 1 532.9 20.6V22.3" fill="none" stroke="#31363b" stroke-width="1.1"/>
<rect x="556" y="12" width="3" height="3" fill="#eff0f1"/>
<rect x="569" y="12" width="3" height="3" fill="#eff0f1"/>
<rect x="556" y="25" width="3" height="3" fill="#eff0f1"/>
<rect x="569" y="25" width="3" height="3" fill="#eff0f1"/>
<path d="M568 18.8V24.6H561.8Z" fill="#e8eaec"/>
<circle cx="561.2" cy="19.2" r="4.5" fill="#31363b"/>
<circle cx="561.2" cy="19.2" r="3.6" fill="#e8eaec"/>
<rect x="585" y="13" width="2.2" height="2.2" fill="#eff0f1"/>
<rect x="593" y="13" width="2.2" height="2.2" fill="#eff0f1"/>
<rect x="597" y="15" width="2.2" height="2.2" fill="#eff0f1"/>
<rect x="585" y="22" width="2.2" height="2.2" fill="#eff0f1"/>
<rect x="589" y="25" width="2.2" height="2.2" fill="#eff0f1"/>
<rect x="597" y="25" width="2.2" height="2.2" fill="#eff0f1"/>
<path d="M597 17.8V23.6H590.8Z" fill="#e8eaec"/>
<circle cx="590.3" cy="18.7" r="4.5" fill="#31363b"/>
<circle cx="590.3" cy="18.7" r="3.6" fill="#e8eaec"/>
<path d="M631 12.5H619.5V25" fill="none" stroke="#cfd1d3" stroke-width="1"/>
<path d="M634.3 12.6L627.8 23.2L625.6 21.9L632.9 12.2Z" fill="#eff0f1"/>
<path d="M625 22.4L627.4 23.9C627.5 26 625 27.6 620.3 27.2C622.6 26 622.8 23.2 625 22.4Z" fill="#eff0f1"/>
<path d="M647.9 12.9H660.9L661.1 17.6H660.2C659.6 15.2 658.6 14.1 656.6 14.1V25C656.6 26 657.2 26.3 658.7 26.4V27.1H650.1V26.4C651.6 26.3 652.2 26 652.2 25V14.1C650.2 14.1 649.2 15.2 648.6 17.6H647.7Z" fill="#eff0f1"/>
<path d="M678.3 14H687.0999999999999L684.0999999999999 16.8H675.3Z" fill="#eff0f1"/>
<path d="M680.5 19H689.3L686.3 21.8H677.5Z" fill="#eff0f1"/>
<path d="M682.3 24.2H691.0999999999999L688.0999999999999 27.0H679.3Z" fill="#eff0f1"/>
<rect x="703.6" y="12.5" width="15" height="14.8" fill="none" stroke="#eff0f1" stroke-width="1.1"/>
<rect x="705.3" y="14.1" width="11.7" height="1.8" fill="#eff0f1"/>
<path d="M710.3 19L706.6 22L710.3 25M712 19L715.7 22L712 25" fill="none" stroke="#eff0f1" stroke-width="1.1"/>
<rect x="731.6" y="12.5" width="15" height="14.8" fill="none" stroke="#eff0f1" stroke-width="1.1"/>
<rect x="733.3" y="14.1" width="11.7" height="1.8" fill="#eff0f1"/>
<path d="M737.5 17.6H736.6Q735.8 17.6 735.8 18.6V20.3Q735.8 21.4 734.8 21.4Q735.8 21.4 735.8 22.5V24.2Q735.8 25.2 736.6 25.2H737.5 M740.7 17.6H741.6Q742.4 17.6 742.4 18.6V20.3Q742.4 21.4 743.4 21.4Q742.4 21.4 742.4 22.5V24.2Q742.4 25.2 741.6 25.2H740.7" fill="none" stroke="#c9cbcd" stroke-width="1"/>
<rect x="760.1" y="13" width="1" height="13" fill="#eff0f1"/>
<rect x="763" y="13.1" width="7" height="2.6" fill="#eff0f1"/>
<rect x="763" y="18.1" width="10.2" height="2.8" fill="#eff0f1"/>
<rect x="763" y="23.1" width="6.2" height="2.6" fill="#eff0f1"/>
<path d="M800.6 26.8H797.3V14H803.8L807.1 17.4V24.4" fill="none" stroke="#eff0f1" stroke-width="2"/>
<path d="M803 23.6L806.6 27.6" stroke="#eff0f1" stroke-width="2.1"/>
<circle cx="802" cy="22.2" r="2.8" fill="#eff0f1"/>
<path d="M802 22L799.4 19" stroke="#31363b" stroke-width="1.9"/><circle cx="801.8" cy="21.9" r="1.05" fill="#31363b"/>
<path d="M826.5 16.5L833 23" stroke="#eff0f1" stroke-width="3"/>
<circle cx="825.2" cy="15.2" r="3.3" fill="#eff0f1"/>
<path d="M825 14.9L821.8 11.7" stroke="#31363b" stroke-width="2.3"/><circle cx="824.9" cy="14.8" r="1.25" fill="#31363b"/>
<circle cx="834.4" cy="24.3" r="3.3" fill="#eff0f1"/>
<path d="M834.8 24.7L838.2 28.1" stroke="#31363b" stroke-width="2.3"/><circle cx="834.9" cy="24.8" r="1.25" fill="#31363b"/>
<path d="M836 14L823.6 26.4" stroke="#31363b" stroke-width="3.2"/>
<path d="M835.8 14.2L829 21" stroke="#eff0f1" stroke-width="1.3"/>
<path d="M836.6 11.9L838.2 13.5L836.3 15.6L834.5 13.8Z" fill="#eff0f1"/>
<path d="M828.7 21.3L823.6 26.4" stroke="#eff0f1" stroke-width="3.1" stroke-linecap="round"/>
<rect x="893" y="8" width="24" height="24" rx="3" fill="#3daee9"/>
<path d="M903.5 14.4H906A5.6 5.6 0 0 1 906 25.6H903.5" fill="none" stroke="#e6f6fe" stroke-width="2.7"/>
<circle cx="900.4" cy="14.3" r="1.65" fill="#e6f6fe"/><circle cx="900.4" cy="25.6" r="1.65" fill="#e6f6fe"/>
<path d="M900.6 18.2Q898.6 18 899 19.3Q899.3 20 900 20.2Q900.8 20.6 900.6 21.4Q900.2 22.2 898.6 21.8" fill="none" stroke="#e6f6fe" stroke-width="1.2"/>
<rect x="921.5" y="8.5" width="23" height="23" rx="3" fill="none" stroke="#5c6166"/>
<path d="M936 14V26L930 20Z" fill="#eff0f1"/><rect x="265" y="41" width="1" height="38" fill="#50555b"/>
<rect x="558" y="41" width="1" height="38" fill="#50555b"/>
<path d="M14.1 58V54H20.4L24.2 57.8V66H18" fill="none" stroke="#eff0f1" stroke-width="2"/>
<path d="M19.8 54.3V58.4H23.9Z" fill="#eff0f1"/>
<rect x="10.9" y="61.9" width="8.2" height="2" fill="#eff0f1"/><rect x="14" y="59.2" width="2.1" height="7.7" fill="#eff0f1"/>
<path d="M180.5 52.2H191.5V64L187.6 67.7H180.5Z" fill="none" stroke="#eff0f1" stroke-width="1"/>
<path d="M191.5 64H187.6V67.7" fill="none" stroke="#eff0f1" stroke-width="1"/>
<path d="M213.8 57H226.2L220 63Z" fill="#eff0f1"/>
<path d="M243.9 55.9H248.6L251.9 59.2V64.1H243.9Z" fill="none" stroke="#eff0f1" stroke-width="2"/>
<path d="M248.5 56.4V59.4H251.5Z" fill="#eff0f1"/>
<path d="M244.8 52H251.2L248 54Z M244.8 68H251.2L248 66Z M239.8 57V63L242.1 60Z M256.2 57V63L253.9 60Z" fill="#eff0f1"/>
<path d="M279.9 58V54.1H286L289 57.2V65.9H279.9V63" fill="none" stroke="#eff0f1" stroke-width="2"/>
<path d="M285.4 54.4V58H288.8Z" fill="#eff0f1"/>
<rect x="278.5" y="59.5" width="5" height="2" fill="#eff0f1"/><path d="M275.8 60.5L279.6 57.2V63.8Z" fill="#eff0f1"/>
<path d="M341.4 58V57.2L338.4 54.1H333.2V65.9H341.4V63" fill="none" stroke="#474c52" stroke-width="2"/>
<path d="M337.8 54.4V58H341.2Z" fill="#474c52"/>
<rect x="338" y="59.5" width="5" height="2" fill="#474c52"/><path d="M346.2 60.5L342.4 57.2V63.8Z" fill="#474c52"/>
<path d="M536.8 58V53.8H543.8L547 57.2V66H542" fill="none" stroke="#eff0f1" stroke-width="2"/>
<path d="M543.2 54.1V58H546.8Z" fill="#eff0f1"/>
<path d="M534.4 60.8L540.2 66.6M540.2 60.8L534.4 66.6" stroke="#eff0f1" stroke-width="1.9"/>
<path d="M570 56V53.8H577.6L580.8 57.2V66H570V65" fill="none" stroke="#eff0f1" stroke-width="2"/>
<path d="M577 54.1V58H580.6Z" fill="#eff0f1"/>
<rect x="568.6" y="58.2" width="5.4" height="4.8" fill="none" stroke="#eff0f1" stroke-width="2"/>
<rect x="570.6" y="59.9" width="1.4" height="1.4" fill="#9da1a5"/><path d="M7.9 87V99.2L10.9 96.6L13.2 101.4L15.2 100.4L13 95.8L17 95.6Z" fill="#c4c6c8"/>
<path d="M5.6 124.4C5.8 119 7 116 8.3 114.2C11 112.4 15 111.8 18.4 111.6" fill="none" stroke="#e4e6e8" stroke-width="1.1"/>
<rect x="4.5" y="123.30000000000001" width="2.2" height="2.2" fill="#e4e6e8"/>
<rect x="7.1" y="113.10000000000001" width="2.2" height="2.2" fill="#e4e6e8"/>
<rect x="17.299999999999997" y="110.5" width="2.2" height="2.2" fill="#e4e6e8"/>
<path d="M11 117.4L18.3 121.2L15.4 125.4Z" fill="#e4e6e8"/>
<rect x="6" y="136.9" width="11.9" height="11.5" fill="none" stroke="#e4e6e8" stroke-width="1.5"/>
<circle cx="12" cy="167.2" r="6.5" fill="none" stroke="#e4e6e8" stroke-width="1.3"/>
<polygon points="9.6,183.6 15.6,187.4 13.6,194.6 6.8,195 4.3,188.4" fill="none" stroke="#e4e6e8" stroke-width="1.1"/>
<polygon points="14.73,186.18 15.37,190.16 19.19,191.49 15.59,193.33 15.51,197.37 12.65,194.52 8.78,195.69 10.61,192.09 8.30,188.77 12.29,189.40" fill="#31363b" stroke="#e4e6e8" stroke-width="1.1"/>
<path d="M5.8 211L12 208.6V215.4L6.2 217.8Z" fill="#ecedee"/>
<path d="M12 208.6L18.8 211.4L18.6 218.4L12 215.4Z" fill="#8d8f91"/>
<path d="M6.2 217.8L12 215.4L18.6 218.4L12.4 222.2Z" fill="#b6b8ba"/>
<polyline points="12.25,239.62 12.36,239.63 12.46,239.66 12.57,239.70 12.67,239.76 12.78,239.83 12.87,239.91 12.96,240.01 13.04,240.12 13.11,240.24 13.16,240.38 13.21,240.52 13.23,240.68 13.24,240.84 13.23,241.00 13.20,241.17 13.15,241.33 13.08,241.50 13.00,241.66 12.89,241.81 12.76,241.96 12.62,242.09 12.45,242.21 12.28,242.31 12.08,242.39 11.88,242.46 11.66,242.50 11.44,242.52 11.21,242.52 10.98,242.49 10.74,242.44 10.51,242.35 10.29,242.25 10.08,242.11 9.87,241.96 9.68,241.78 9.51,241.57 9.36,241.35 9.23,241.10 9.13,240.84 9.05,240.56 9.00,240.28 8.98,239.98 8.99,239.68 9.04,239.38 9.12,239.08 9.23,238.79 9.37,238.50 9.55,238.23 9.75,237.97 9.99,237.74 10.25,237.52 10.53,237.34 10.84,237.18 11.17,237.05 11.52,236.96 11.87,236.90 12.24,236.88 12.61,236.90 12.98,236.96 13.35,237.06 13.71,237.19 14.06,237.37 14.39,237.58 14.70,237.84 14.99,238.12 15.24,238.44 15.47,238.79 15.66,239.16 15.82,239.55 15.93,239.97 16.00,240.39 16.02,240.83 16.00,241.27 15.93,241.72 15.82,242.15 15.65,242.58 15.45,242.99 15.20,243.38 14.90,243.75 14.57,244.09 14.20,244.40 13.79,244.67 13.36,244.89 12.90,245.07 12.41,245.21 11.92,245.29 11.41,245.32 10.90,245.30 10.38,245.23 9.87,245.10 9.38,244.92 8.90,244.68 8.44,244.40 8.02,244.06 7.62,243.68 7.27,243.26 6.96,242.80 6.69,242.30 6.48,241.77 6.32,241.23 6.22,240.66 6.17,240.08 6.19,239.49 6.27,238.91 6.41,238.33 6.61,237.76 6.87,237.22 7.19,236.70 7.56,236.21 7.98,235.76 8.46,235.35 8.97,234.99 9.53,234.69 10.12,234.44 10.73,234.25 11.37,234.13 12.02,234.07 12.68,234.08 13.33,234.16 13.98,234.31 14.62,234.52 15.23,234.81 15.82,235.15 16.37,235.56 16.88,236.03 17.34,236.55 17.75,237.12 18.10,237.73 18.39,238.38 18.60,239.06 18.75,239.76 18.83,240.48 18.83,241.21 18.75,241.94 18.60,242.67 18.37,243.37 18.07,244.06 17.70,244.71 17.26,245.33 16.75,245.90" fill="none" stroke="#e4e6e8" stroke-width="1.35"/>
<path d="M5.6 257H12.4M5.6 270.2H12.6" stroke="#e4e6e8" stroke-width="0.9" fill="none"/>
<path d="M7 257.4C9.5 260.5 9.8 264.5 11.2 267.2C12 268.6 13 268.4 13.6 267" stroke="#e4e6e8" stroke-width="1" fill="none"/>
<rect x="4.3" y="255.7" width="2.6" height="2.6" fill="#e4e6e8"/>
<rect x="4.3" y="268.9" width="2.6" height="2.6" fill="#e4e6e8"/>
<ellipse cx="16.2" cy="259.6" rx="2.7" ry="3.9" transform="rotate(22 16.2 259.6)" fill="#e4e6e8"/>
<path d="M13.8 262.8L16.4 264L15 266.4L13.2 265.6Z" fill="#e4e6e8"/>
<path d="M14 266L12.9 268.4" stroke="#e4e6e8" stroke-width="1.4"/>
<path d="M14.6 283.4L17.8 286.6L8.8 295.6L4.7 297L6 292.4Z" fill="#e4e6e8"/>
<path d="M15.6 282.4L17.1 280.9Q17.9 280.3 18.7 281L20.1 282.4Q20.8 283.2 20.1 284L18.7 285.5Z" fill="#e4e6e8"/>
<path d="M9.8 281.6C7.8 280.4 5.4 281.4 5.8 283.2C6.2 284.8 8.8 284.6 8.4 286.2C8 287.6 5.8 287.8 4.8 289" stroke="#e4e6e8" stroke-width="1.3" fill="none"/>
<path d="M4.4 305.4C6.6 304 8 305 7.4 307.6C6.6 311.2 4.8 314.6 5.4 317.6C5.8 319.6 7.6 319.6 8.6 318.2" stroke="#e4e6e8" stroke-width="1.7" fill="none" stroke-linecap="round"/>
<path d="M16.4 305.2L19.8 308.4L18.2 310.2L14.8 307Z" fill="#e4e6e8"/>
<path d="M14.2 307.6L17.8 310.8C17 313.8 15 315.6 9 317.6C10.4 312.4 11.8 309.6 14.2 307.6Z" fill="none" stroke="#e4e6e8" stroke-width="1.4"/>
<path d="M9.4 317.2L13.6 312.8" stroke="#e4e6e8" stroke-width="1"/><circle cx="13.8" cy="312.4" r="1" fill="#e4e6e8"/>
<path d="M3.7 342.8L8.1 329.6H11.1L15.5 342.8H12.7L11.8 339.9H7.4L6.5 342.8ZM8 337.7H11.2L9.6 332.5Z" fill="#e4e6e8" fill-rule="evenodd"/>
<rect x="16.9" y="329.6" width="2.2" height="13.2" fill="#e4e6e8"/>
<defs><linearGradient id="gr1" x1="0" y1="0" x2="1" y2="1"><stop offset="0" stop-color="#d9dbdd"/><stop offset="0.5" stop-color="#a2a4a6"/><stop offset="1" stop-color="#77797b"/></linearGradient></defs>
<rect x="4.8" y="353.9" width="14.4" height="14" rx="1.5" fill="url(#gr1)" stroke="#a7a9ab" stroke-width="1"/>
<path d="M5.4 355.4L11.6 361.4L5.4 367Z" fill="#fbfbfb"/>
<path d="M7.6 357.2L16 364.6" stroke="#1c1e20" stroke-width="0.9"/><circle cx="7.6" cy="357.2" r="1.1" fill="#1c1e20"/><circle cx="16" cy="364.6" r="1.1" fill="#1c1e20"/>
<path d="M6.6 379.2L17.6 379.4L17 390.8L6.4 390.4Z" fill="#6d7073"/>
<path d="M6.6 383L17.4 383.2M6.5 386.8L17.2 387M10.2 379.2L10 390.6M13.9 379.3L13.6 390.7" stroke="#85888b" stroke-width="0.7"/>
<rect x="5.0" y="377.8" width="2.8" height="2.8" fill="#e4e6e8"/>
<rect x="16.200000000000003" y="378.0" width="2.8" height="2.8" fill="#e4e6e8"/>
<rect x="4.9" y="389.1" width="2.8" height="2.8" fill="#e4e6e8"/>
<rect x="15.799999999999999" y="389.40000000000003" width="2.8" height="2.8" fill="#e4e6e8"/>
<ellipse cx="15.9" cy="403.6" rx="2.3" ry="3.6" transform="rotate(38 15.9 403.6)" fill="#e4e6e8"/>
<path d="M11.4 405.2L15.4 408.6" stroke="#e4e6e8" stroke-width="1.7"/>
<path d="M13 407.4L8.4 413.6" stroke="#e4e6e8" stroke-width="1.8"/>
<circle cx="7.3" cy="415.4" r="1.45" fill="#e4e6e8"/>
<rect x="13.4" y="425.4" width="1.8" height="8" fill="#e4e6e8"/>
<path d="M8.4 432.4L12.6 431.4V434H16V430.8L17 430.6L19.4 436.2L12.8 440.4Z" fill="#e4e6e8"/>
<path d="M9.4 434.6L8.2 431.6Q6.6 430.6 5.2 432.4V438.8H7.6V434Z" fill="#e4e6e8"/>
<path d="M5 465.6V460L8.4 458.8C9.2 455 11.6 452.6 14.4 452.8C16.4 453 17.6 454.4 17.4 456C16.4 455 14.6 454.8 13.8 456C13.2 457.2 14 458.6 16 458.8L19.2 459V465.6Z" fill="#e4e6e8"/>
<path d="M11.6 483.4Q11.6 481.2 13.8 481H16.8Q19 481.2 19 483.4V487Q19 488.8 17 489H13.6Q11.6 488.8 11.6 487Z" fill="#e4e6e8"/>
<path d="M13.2 480.4L14 477.4H16.6L17.4 480.4Z" fill="#e4e6e8"/><rect x="14.4" y="476.2" width="1.8" height="1.4" fill="#e4e6e8"/>
<circle cx="6.2" cy="475.4" r="0.6" fill="#c9cbcd"/>
<circle cx="8.4" cy="476.6" r="0.6" fill="#c9cbcd"/>
<circle cx="5.4" cy="478" r="0.6" fill="#c9cbcd"/>
<circle cx="7.6" cy="478.6" r="0.6" fill="#c9cbcd"/>
<circle cx="9.8" cy="478.2" r="0.6" fill="#c9cbcd"/>
<circle cx="6.6" cy="480.8" r="0.6" fill="#c9cbcd"/>
<circle cx="8.8" cy="480.6" r="0.6" fill="#c9cbcd"/>
<circle cx="10.6" cy="476" r="0.6" fill="#c9cbcd"/>
<path d="M10.9 503.2L15.4 499.2L19 503.2L14.5 507.2Z" fill="#e4e6e8"/>
<path d="M10.1 503.9L13.7 507.9L10.7 510.6L7.1 506.6Z" fill="#e4e6e8"/>
<rect x="5" y="511.6" width="3.2" height="1.2" fill="#e4e6e8"/><rect x="10.6" y="511.6" width="8.4" height="1.2" fill="#e4e6e8"/>
<rect x="8" y="522.8" width="4.6" height="4.4" fill="#e4e6e8"/><rect x="5" y="533.4" width="4.6" height="4.6" fill="#e4e6e8"/><rect x="14.8" y="533.4" width="4.6" height="4.6" fill="#e4e6e8"/>
<path d="M9.6 527L7.4 533.6M12.4 524.4Q17.4 525 17.4 529V533.6" stroke="#e4e6e8" stroke-width="1" fill="none"/>
<circle cx="12" cy="549.6" r="1.9" fill="none" stroke="#e4e6e8" stroke-width="1.3"/>
<path d="M11.2 551.4L7.2 561.6M12.8 551.4L16.8 561.6" stroke="#e4e6e8" stroke-width="1.5" fill="none"/>
<path d="M4.8 556.4H19.2" stroke="#e4e6e8" stroke-width="1"/><circle cx="12" cy="556.4" r="1" fill="#e4e6e8"/>
<rect x="8.9" y="573.1" width="6.6" height="12.6" fill="none" stroke="#e4e6e8" stroke-width="1.3"/>
<path d="M9.4 575.4H11.4M9.4 577.4H10.8M9.4 579.4H11.4M9.4 581.4H10.8M9.4 583.4H11.4" stroke="#a9abad" stroke-width="0.8"/>
<circle cx="11.4" cy="601.6" r="5.3" fill="none" stroke="#e4e6e8" stroke-width="1.6"/>
<path d="M15.2 605.4L18.4 608.8" stroke="#e4e6e8" stroke-width="2" stroke-linecap="round"/>
<rect x="0" y="615" width="24" height="24" rx="3.5" fill="#3daee9"/>
<path d="M9.6 620.2H15.6L17.8 622.4V632.2H15.6" fill="none" stroke="#e2f6ff" stroke-width="1.1"/>
<path d="M6.6 622.4H12.2L14.6 624.8V633.6H6.6Z" fill="none" stroke="#e2f6ff" stroke-width="1.2"/>
<path d="M12 622.6V625H14.4" fill="none" stroke="#e2f6ff" stroke-width="1"/><rect x="31.9" y="90.3" width="10.2" height="7.9" fill="#d3d5d7"/>
<path d="M34.1 90.6V88A2.95 2.95 0 0 1 40 88V90.6" fill="none" stroke="#d3d5d7" stroke-width="1.7"/>
<rect x="43" y="100" width="4" height="4" fill="#a6a9ac"/><path d="M44 103.4L46.4 101" stroke="#3a3f44" stroke-width="0.8"/>
<rect x="927.5" y="82.5" width="17.5" height="17" rx="2.5" fill="none" stroke="#555a60"/>
<path d="M940 95L943.2 97.8" stroke="#eff0f1" stroke-width="2.6" stroke-linecap="round"/>
<circle cx="935.4" cy="90.3" r="7.3" fill="#eff0f1"/>
<path d="M931 88.4L932.6 87.2H933.6V93.8H932.2V88.9L931 89.7Z" fill="#1d2023"/>
<path d="M937 88.4L938.6 87.2H939.6V93.8H938.2V88.9L937 89.7Z" fill="#1d2023"/>
<rect x="934.9" y="89.2" width="1.3" height="1.3" fill="#1d2023"/><rect x="934.9" y="92.4" width="1.3" height="1.3" fill="#1d2023"/>
<rect x="927.5" y="634.5" width="17.5" height="17" rx="2.5" fill="none" stroke="#555a60"/>
<circle cx="935.9" cy="639.5" r="3.5" fill="none" stroke="#eff0f1" stroke-width="1"/>
<circle cx="931.8" cy="646.9" r="3.5" fill="none" stroke="#eff0f1" stroke-width="1"/><circle cx="931.8" cy="646.9" r="1.9" fill="#eff0f1"/>
<circle cx="940.1" cy="646.9" r="3.5" fill="none" stroke="#eff0f1" stroke-width="1"/><circle cx="940.1" cy="646.9" r="1.9" fill="#eff0f1"/>
<rect x="935.3" y="643.4" width="1.3" height="5" fill="#eff0f1"/>
<path d="M888.3 667.3L894 661.1L899.7 667.3" fill="none" stroke="#eff0f1" stroke-width="1.6"/>
<path d="M911.5 659.1L917.2 665.3L922.9 659.1" fill="none" stroke="#eff0f1" stroke-width="1.6"/>
<rect x="929.5" y="653.5" width="20" height="19" rx="2.5" fill="none" stroke="#555a60"/>
<rect x="932" y="657" width="14" height="2" fill="#eff0f1"/>
<rect x="932" y="662.1" width="14" height="2" fill="#eff0f1"/>
<rect x="932" y="667.1" width="14" height="2" fill="#eff0f1"/>
<path d="M210 693.5H223.4M226.4 693.5H240M233.2 686.6V700.4" stroke="#6c7075" stroke-width="1.4" fill="none"/>
<rect x="258" y="683" width="3.4" height="19" fill="#4a80d4"/>
<path d="M327.4 693.6C330.4 688.6 339.6 688.6 342.8 693.6C339.6 698.8 330.4 698.8 327.4 693.6Z" fill="none" stroke="#eff0f1" stroke-width="1.6"/>
<circle cx="335.1" cy="693.6" r="3" fill="#eff0f1"/><circle cx="335.1" cy="693.6" r="1.2" fill="#31363b"/>
<path d="M329.8 688.4L328.9 687M332.4 687.2L332 685.6M335.1 686.8V685.2M337.8 687.2L338.2 685.6M340.4 688.4L341.3 687" stroke="#eff0f1" stroke-width="0.9"/>
<rect x="358.8" y="693" width="8.8" height="7.6" fill="#eff0f1"/>
<path d="M365.2 693V690.4A3 3 0 0 1 371.6 690.4V692.4" fill="none" stroke="#eff0f1" stroke-width="1.6"/>
<rect x="380" y="680" width="1" height="29" fill="#50555b"/>
<rect x="613" y="674" width="1" height="35" fill="#50555b"/>
<path d="M500.6 687.6V699L494.2 693.3Z" fill="#eff0f1"/>
<path d="M595 687.8V699L601.2 693.4Z" fill="#474c52"/>
<path d="M560.4 689.6H572.2L566.3 696Z" fill="#eff0f1"/>
<path d="M768.8 693.5H783.2M789 693.5H803.4M796.2 686.4V700.6" stroke="#eff0f1" stroke-width="1.5" fill="none"/>
<path d="M897 693.5H911.4M917 693.5H931.2M924.1 686.4V700.6" stroke="#eff0f1" stroke-width="1.5" fill="none"/></svg>
<div class="t" style="left:-2.20px;top:87.12px;font-size:13.33px;letter-spacing:-0.30px;color:rgba(150,154,158,0.42);font-style:normal;">e a</div>
<div class="t" style="left:16.90px;top:87.12px;font-size:13.33px;letter-spacing:-0.34px;color:rgba(150,154,158,0.42);font-style:normal;">new page</div>
</body></html>
